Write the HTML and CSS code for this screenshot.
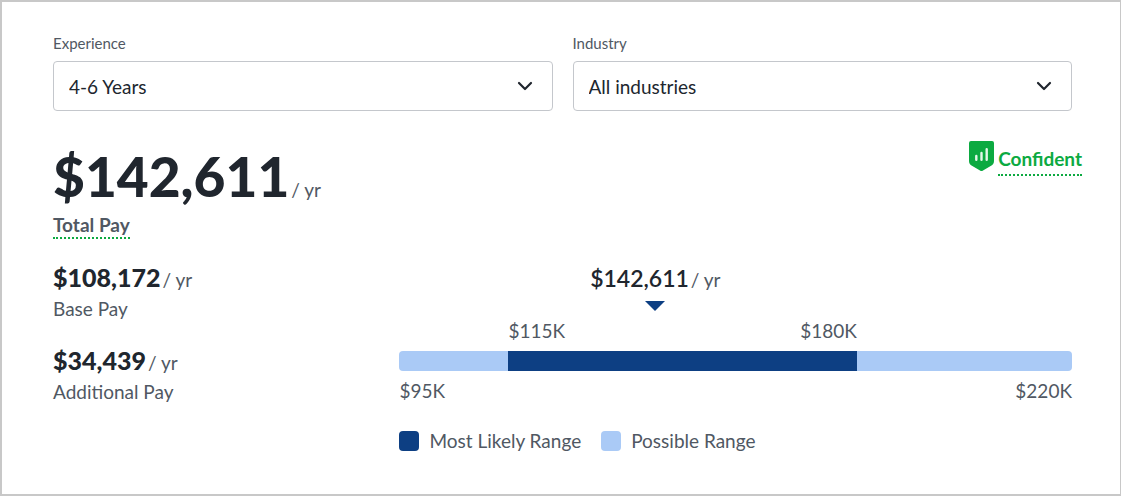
FILE: index.html
```html
<!DOCTYPE html>
<html lang="en">
<head>
<meta charset="utf-8">
<meta name="viewport" content="width=device-width, initial-scale=1">
<title>Total Pay</title>
<link rel="stylesheet" href="styles.css">
</head>
<body>
<main class="card">
  <form class="filters">
    <div class="field">
      <label class="field-label" for="experience">Experience</label>
      <div class="select-wrap">
        <select class="select" id="experience"><option>4-6 Years</option></select>
        <svg class="chevron" viewBox="0 0 16 10" aria-hidden="true"><path d="M2 2l6 6 6-6"/></svg>
      </div>
    </div>
    <div class="field">
      <label class="field-label" for="industry">Industry</label>
      <div class="select-wrap">
        <select class="select" id="industry"><option>All industries</option></select>
        <svg class="chevron" viewBox="0 0 16 10" aria-hidden="true"><path d="M2 2l6 6 6-6"/></svg>
      </div>
    </div>
  </form>

  <section class="summary">
    <div class="total">
      <div class="amount"><strong class="total-value">$142,611</strong> <span class="unit">/ yr</span></div>
      <button class="term" type="button">Total Pay</button>
    </div>
    <div class="confidence">
      <svg class="shield" viewBox="0 0 25 30" aria-hidden="true">
        <path class="shield-body" d="M2 0h21a2 2 0 0 1 2 2v18c0 2-1 3.500-2.500 4.500L14 29.500q-1.500 1-3 0L2.500 24.500C1 23.500 0 22 0 20V2a2 2 0 0 1 2-2z"/>
        <path class="shield-bars" d="M7.300 15v3.700M12.500 12v6.700M17.700 8.300v10.400"/>
      </svg>
      <button class="term term-green" type="button">Confident</button>
    </div>
  </section>

  <section class="details">
    <div class="parts">
      <div class="part">
        <div class="amount"><strong class="part-value">$108,172</strong> <span class="unit">/ yr</span></div>
        <div class="part-label">Base Pay</div>
      </div>
      <div class="part">
        <div class="amount"><strong class="part-value">$34,439</strong> <span class="unit">/ yr</span></div>
        <div class="part-label">Additional Pay</div>
      </div>
    </div>
    <div class="range">
      <div class="marker" style="width: 76.1%">
        <div class="amount amount-centered"><strong class="marker-value">$142,611</strong> <span class="unit">/ yr</span></div>
        <svg class="pointer" viewBox="0 0 20 10" aria-hidden="true"><path d="M0 0h20L10 10z"/></svg>
      </div>
      <div class="likely-labels" style="margin-left: 16.2%; margin-right: 32%"><span>$115K</span><span>$180K</span></div>
      <div class="bar"><div class="bar-likely" style="margin-left: 16.2%; width: 51.8%"></div></div>
      <div class="ends"><span>$95K</span><span>$220K</span></div>
      <ul class="legend">
        <li class="legend-item"><span class="swatch swatch-likely"></span>Most Likely Range</li>
        <li class="legend-item"><span class="swatch swatch-possible"></span>Possible Range</li>
      </ul>
    </div>
  </section>
</main>
</body>
</html>
```
FILE: styles.css
```css
* { box-sizing: border-box; }

body {
  margin: 0;
  background: #fff;
  color: #505863;
  font: 19px/30px Lato, "Liberation Sans", sans-serif;
}

.card {
  min-height: 100vh;
  padding: 31px 48px 32px 51px;
  border: 2px solid #c8c8c8;
  border-right-width: 1px;
}

.filters {
  display: grid;
  grid-template-columns: 1fr 1fr;
  gap: 20px;
}

.field-label {
  display: block;
  margin-bottom: 8px;
  font-size: 15px;
  line-height: 20px;
}

.select-wrap { display: grid; align-items: center; }

.select, .chevron { grid-area: 1 / 1; }

.select {
  width: 100%;
  height: 50px;
  padding: 2px 48px 0 15px;
  border: 1px solid #c4c7cc;
  border-radius: 4px;
  background: #fff;
  color: #20262e;
  font: inherit;
  appearance: none;
}

.chevron {
  justify-self: end;
  width: 16px;
  height: 10px;
  margin-right: 20px;
  fill: none;
  stroke: #20262e;
  stroke-width: 2.2;
  stroke-linecap: round;
  stroke-linejoin: round;
  pointer-events: none;
}

.summary {
  display: flex;
  justify-content: space-between;
  align-items: flex-start;
  margin-top: 30px;
  margin-right: -10px;
}

.amount {
  display: flex;
  align-items: baseline;
  gap: 2px;
}

.amount-centered { justify-content: center; }

.unit { line-height: 20px; }

.total-value {
  color: #20262e;
  font-size: 55px;
  font-weight: 900;
  line-height: 70px;
}

.term {
  display: block;
  padding: 2px 0 0;
  border: 0;
  border-bottom: 2px dotted #0caa41;
  background: none;
  color: #505863;
  font: inherit;
  font-weight: 700;
  line-height: 24px;
}

.confidence { display: flex; gap: 4px; }

.shield { width: 25px; height: 30px; }

.shield-body { fill: #0caa41; }

.shield-bars {
  fill: none;
  stroke: #e3f7e9;
  stroke-width: 2.4;
  stroke-linecap: round;
}

.term-green { margin-top: 4px; padding-bottom: 3px; color: #0caa41; }

.details {
  display: grid;
  grid-template-columns: 34fr 66fr;
  margin-top: 24px;
}

.parts { display: grid; align-content: start; gap: 22px; }

.part-value { color: #20262e; font-size: 25px; font-weight: 900; line-height: 28px; }

.part-label { padding-top: 3px; }

.marker-value { color: #20262e; font-size: 23px; font-weight: 600; }

.pointer {
  display: block;
  width: 20px;
  height: 10px;
  margin: 8px auto 5px;
  fill: #0d3f83;
}

.likely-labels, .ends { display: flex; justify-content: space-between; }

.bar {
  height: 20px;
  margin: 5px 0;
  overflow: hidden;
  border-radius: 4px;
  background: #aacaf6;
}

.bar-likely { height: 100%; background: #0d3f83; }

.legend {
  display: flex;
  flex-wrap: wrap;
  gap: 20px;
  margin: 20px 0 0;
  padding: 0;
  list-style: none;
}

.legend-item { display: flex; align-items: center; gap: 10px; }

.swatch { width: 20px; height: 20px; border-radius: 4px; }

.swatch-likely { background: #0d3f83; }

.swatch-possible { background: #aacaf6; }
```
